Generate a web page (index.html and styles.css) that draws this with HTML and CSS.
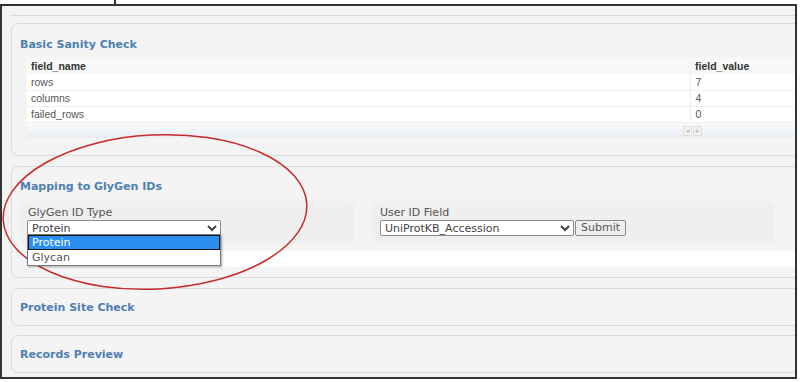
FILE: index.html
```html
<!DOCTYPE html>
<html lang="en">
<head>
  <meta charset="UTF-8">
  <title>Dataset check</title>
  <link rel="stylesheet" href="styles.css">
</head>
<body>
  <div class="topbar"><div class="tab"></div></div>

  <div class="frame">
    <div class="prev"></div>

    <section class="panel">
      <h2 class="panel-title">Basic Sanity Check</h2>
      <div class="grid">
        <table class="grid-table">
          <thead>
            <tr><th class="col-name">field_name</th><th class="col-value">field_value</th></tr>
          </thead>
          <tbody>
            <tr><td class="col-name">rows</td><td class="col-value">7</td></tr>
            <tr><td class="col-name">columns</td><td class="col-value">4</td></tr>
            <tr><td class="col-name">failed_rows</td><td class="col-value">0</td></tr>
          </tbody>
        </table>
        <div class="grid-foot">
          <div class="pager">
            <span class="pager-btn">&#9666;</span><span class="pager-btn">&#9656;</span>
          </div>
        </div>
      </div>
    </section>

    <section class="panel panel-map">
      <h2 class="panel-title">Mapping to GlyGen IDs</h2>
      <div class="forms">
        <div class="form-box form-left">
          <label class="form-label">GlyGen ID Type</label>
          <div class="select-wrap">
            <select class="field-select select-type">
              <option>Protein</option>
              <option>Glycan</option>
            </select>
            <ul class="dropdown">
              <li class="dropdown-item active">Protein</li>
              <li class="dropdown-item">Glycan</li>
            </ul>
          </div>
        </div>
        <div class="form-box form-right">
          <label class="form-label">User ID Field</label>
          <div class="select-wrap">
            <select class="field-select select-field">
              <option>UniProtKB_Accession</option>
            </select><button class="submit-btn">Submit</button>
          </div>
        </div>
      </div>
      <div class="result-bar"></div>
    </section>

    <section class="panel panel-small">
      <h2 class="panel-title">Protein Site Check</h2>
    </section>

    <section class="panel panel-small">
      <h2 class="panel-title">Records Preview</h2>
    </section>
  </div>

  <!-- hand drawn highlight -->
  <svg class="annotation" width="800" height="382" viewBox="0 0 800 382">
    <ellipse cx="155" cy="212" rx="152" ry="77" transform="rotate(-3 155 212)" fill="none" stroke="#c62a2a" stroke-width="1.5"/>
  </svg>
</body>
</html>
```

FILE: styles.css
```css
body {
  margin: 0;
  width: 800px;
  height: 382px;
  position: relative;
  background: #fff;
  font-family: "DejaVu Sans", Verdana, sans-serif;
  overflow: hidden;
}

.topbar {
  height: 4px;
}

.tab {
  width: 114px;
  height: 4px;
  border-right: 2px solid #333;
}

.frame {
  width: 793px;
  height: 371px;
  border: 2px solid #333;
  background: #f3f3f3;
  overflow: hidden;
}

.prev {
  margin-left: 8px;
  height: 9px;
  border-bottom: 1px solid #dcdcdc;
}

.panel {
  margin: 7px -30px 0 9px;
  padding: 14px 0 17px 8px;
  border: 1px solid #dcdcdc;
  border-radius: 7px;
  background: #f4f4f4;
}

.panel-map {
  margin-top: 10px;
  padding-top: 13px;
  padding-bottom: 10px;
}

.panel-small {
  margin-top: 10px;
  padding: 12px 0 10px 8px;
}

.panel-small + .panel-small {
  margin-top: 9px;
}

.panel-title {
  margin: 0;
  font-size: 11px;
  line-height: 14px;
  font-weight: bold;
  color: #4e7fb1;
}

/* table */
.grid {
  margin: 6px 0 0 7px;
}

.grid-table {
  width: 100%;
  border-collapse: collapse;
  font-family: "Liberation Sans", Arial, sans-serif;
  font-size: 10.5px;
}

.grid-table th,
.grid-table td {
  height: 16px;
  padding: 0 0 0 4px;
  text-align: left;
  color: #555;
  box-sizing: border-box;
}

.grid-table th {
  background: #f8f8f8;
  color: #333;
  font-weight: bold;
}

.grid-table td {
  background: #fff;
  border-bottom: 1px solid #eeeeee;
}

.grid-table .col-name {
  width: 663px;
}

.grid-table .col-value {
  padding-left: 5px;
}

.grid-table td.col-value {
  border-left: 1px solid #ececec;
}

.grid-foot {
  height: 15px;
  background: linear-gradient(#f9fbfd, #e9eef5);
  position: relative;
}

.pager {
  position: absolute;
  left: 656px;
  top: 3px;
  display: flex;
  gap: 1px;
}

.pager-btn {
  width: 7px;
  height: 8px;
  font-size: 7px;
  line-height: 8px;
  text-align: center;
  color: #bbb;
  border: 1px solid #e0e0e0;
  background: #f2f2f2;
}

/* mapping form */
.forms {
  display: flex;
  gap: 17px;
  margin-top: 7px;
}

.form-box {
  padding: 5px 0 7px 8px;
  border-radius: 8px;
  background: #efefef;
}

.form-left {
  width: 327px;
}

.form-right {
  width: 395px;
}

.form-label {
  display: block;
  font-size: 11px;
  line-height: 14px;
  color: #555;
}

.select-wrap {
  position: relative;
  display: flex;
}

.field-select {
  height: 16px;
  font-family: "DejaVu Sans", Verdana, sans-serif;
  font-size: 11px;
  color: #444;
  padding: 0;
  margin: 0 0 0 -1px;
  border: 1px solid #8a8a8a;
  border-radius: 2px;
  background: #fff;
}

.select-type {
  width: 194px;
}

.select-field {
  width: 194px;
  margin-left: 0;
}

.submit-btn {
  height: 16px;
  margin: 0 0 0 1px;
  padding: 0 5px;
  font-family: "DejaVu Sans", Verdana, sans-serif;
  font-size: 11px;
  line-height: 12px;
  color: #555;
  background: #efefef;
  border: 1px solid #8a8a8a;
  border-radius: 2px;
}

.dropdown {
  position: absolute;
  left: -1px;
  top: 14px;
  width: 192px;
  margin: 0;
  padding: 0;
  list-style: none;
  background: #fff;
  border: 1px solid #7a7a7a;
  box-shadow: 1px 1px 2px rgba(0, 0, 0, 0.35);
  z-index: 2;
}

.dropdown-item {
  height: 15px;
  padding-left: 4px;
  font-size: 11px;
  line-height: 15px;
  color: #555;
}

.dropdown-item.active {
  height: 13px;
  line-height: 13px;
  padding-left: 3px;
  background: #2a8ff0;
  color: #fff;
  border: 1px solid #111;
}

.result-bar {
  height: 16px;
  margin: 8px 0 0 7px;
  background: #fff;
}

.annotation {
  position: absolute;
  left: 0;
  top: 0;
  pointer-events: none;
}
```
